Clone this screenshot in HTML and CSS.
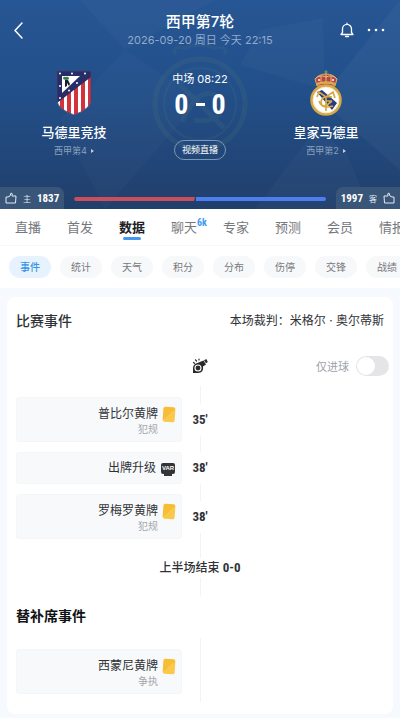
FILE: index.html
```html
<!DOCTYPE html>
<html lang="zh-CN">
<head>
    <meta charset="UTF-8">
    <meta name="viewport" content="width=device-width, initial-scale=1.0">
    <title>西甲第7轮 马德里竞技 - 皇家马德里</title>
    <link rel="stylesheet" href="styles.css">
</head>
<body>
    <header class="match-header">
        <!-- 背景纹理和水印 -->
        <svg class="header-bg" viewBox="0 0 400 209" preserveAspectRatio="xMidYMid slice" aria-hidden="true">
            <path d="M80 0L125 50L215 0Z" fill="#fff" opacity=".025"/>
            <path d="M125 50L60 120L105 209L200 100Z" fill="#fff" opacity=".02"/>
            <path d="M323 18L260 30L240 65L325 90Z" fill="#fff" opacity=".025"/>
            <path d="M400 0L320 100L400 170Z" fill="#fff" opacity=".035"/>
            <path d="M315 130L255 209H370L345 150Z" fill="#fff" opacity=".025"/>
            <g fill="none" stroke="#4d7478" opacity=".2">
                <circle cx="200" cy="104" r="45" stroke-width="5"/>
                <circle cx="200" cy="104" r="36" stroke-width="2"/>
                <path d="M176 80L224 128M182 122Q200 80 222 100Q224 124 194 120" stroke-width="5"/>
                <path d="M176 54Q170 46 185 48Q200 42 215 48Q230 46 224 54" stroke-width="3"/>
            </g>
        </svg>

        <div class="top-bar">
            <button class="icon-btn" type="button" aria-label="返回">
                <svg width="20" height="20" viewBox="0 0 20 20"><path d="M14 3L7 10.500L14 18" fill="none" stroke="#fff" stroke-width="1.500" stroke-linecap="round" stroke-linejoin="round"/></svg>
            </button>
            <div class="title">
                <h1>西甲第7轮</h1>
                <p>2026-09-20 周日 今天 22:15</p>
            </div>
            <div class="actions">
                <button class="icon-btn" type="button" aria-label="提醒">
                    <svg width="16" height="16" viewBox="0 0 16 16"><path d="M2 12.500H14L12.500 10.500V7A4.500 4.700 0 0 0 3.500 7V10.500ZM8 2.300V1.200M6.500 14.500H9.500" fill="none" stroke="#fff" stroke-width="1.300" stroke-linecap="round" stroke-linejoin="round"/></svg>
                </button>
                <button class="icon-btn" type="button" aria-label="更多">
                    <svg width="18" height="16" viewBox="0 0 18 16" fill="#fff"><circle cx="2" cy="8" r="1.300"/><circle cx="9" cy="8" r="1.300"/><circle cx="16" cy="8" r="1.300"/></svg>
                </button>
            </div>
        </div>

        <div class="scoreboard">
            <div class="team">
                <svg class="crest" width="38" height="46" viewBox="0 0 38 46">
                    <defs>
                        <clipPath id="atm"><path d="M2 1H36V31Q35 39 19 45Q3 39 2 31Z"/></clipPath>
                    </defs>
                    <g clip-path="url(#atm)">
                        <path d="M0 0H38V46H0Z" fill="#fff"/>
                        <path d="M5 20H9V46H5ZM12 10H16V46H12ZM19 5H23V46H19ZM26 0H30V46H26ZM33 0H38V46H33Z" fill="#d2333d"/>
                        <path d="M2 1H36V7L2 33Z" fill="#272d68"/>
                        <path d="M7 6H25L7 23Z" fill="#fff"/>
                    </g>
                    <path d="M8 9Q8 6 11 7Q14 6 14 9Q12 11 8 9Z" fill="#3b7b48"/>
                    <path d="M10 10V17L12 16V13L14 16L15 14L13 10Z" fill="#16202c"/>
                    <g fill="#fff"><circle cx="5" cy="3.500" r="1"/><circle cx="17" cy="3.500" r="1"/><circle cx="30" cy="3.500" r="1"/><circle cx="5" cy="16" r="1"/><circle cx="5" cy="28" r="1"/><circle cx="14" cy="20.500" r="1"/><circle cx="22" cy="13" r="1"/></g>
                    <path d="M2 1H36V31Q35 39 19 45Q3 39 2 31Z" fill="none" stroke="#43416f" stroke-width=".8"/>
                </svg>
                <h2>马德里竞技</h2>
                <a class="rank" href="#">西甲第4<i class="arrow"></i></a>
            </div>

            <div class="score">
                <p class="status">中场 08:22</p>
                <p class="goals"><span>0</span><span class="dash"></span><span>0</span></p>
                <button class="live-btn" type="button">视频直播</button>
            </div>

            <div class="team">
                <svg class="crest" width="38" height="46" viewBox="0 0 38 46">
                    <path d="M10 16L8 9Q12 4 19 4Q26 4 30 9L28 16Z" fill="#b9434d" stroke="#d8b158"/>
                    <path d="M8 9Q13 4 19 7Q25 4 30 9M14 6V14M24 6V14M19 1V14" fill="none" stroke="#e4bd68"/>
                    <path d="M10 14Q19 11 28 14" stroke="#d9ad4b" stroke-width="2.500" fill="none"/>
                    <circle cx="19" cy="1.800" r="1.500" fill="#65956b"/>
                    <circle cx="12" cy="10" r="1" fill="#fff"/><circle cx="26" cy="10" r="1" fill="#fff"/>
                    <circle cx="19" cy="30" r="14.500" fill="#fff" stroke="#d7a945" stroke-width="2.500"/>
                    <path d="M10 22L15 20L30 33L25 40Z" fill="#273b83"/>
                    <g fill="none" stroke="#d6aa43" stroke-width="1.700">
                        <path d="M10 27L12 22L19 27L26 22L28 28M19 26V41M25 27Q14 25 14 33Q15 39 26 36M12 31Q14 38 20 35L25 31M19 31H25"/>
                    </g>
                    <circle cx="19" cy="30" r="12.800" fill="none" stroke="#f0ddad" stroke-width=".6"/>
                </svg>
                <h2>皇家马德里</h2>
                <a class="rank" href="#">西甲第2<i class="arrow"></i></a>
            </div>
        </div>

        <div class="vote-bar">
            <button class="vote home" type="button">
                <svg width="12" height="12" viewBox="0 0 12 12"><path d="M1 5H3L5 4L6 1Q8 1 7 4H11L10.500 11H1Z" fill="none" stroke="#e3e9f1" stroke-linejoin="round"/></svg>
                <span>主</span><b>1837</b>
            </button>
            <div class="ratio"><span class="ratio-home" style="width: 48%"></span><span class="ratio-away"></span></div>
            <button class="vote away" type="button">
                <b>1997</b><span>客</span>
                <svg width="12" height="12" viewBox="0 0 12 12"><path d="M11 5H9L7 4L6 1Q4 1 5 4H1L1.500 11H11Z" fill="none" stroke="#e3e9f1" stroke-linejoin="round"/></svg>
            </button>
        </div>
    </header>

    <nav class="tabs">
        <a href="#">直播</a>
        <a href="#">首发</a>
        <a class="active" href="#">数据</a>
        <a href="#">聊天<sup>6k</sup></a>
        <a href="#">专家</a>
        <a href="#">预测</a>
        <a href="#">会员</a>
        <a href="#">情报</a>
    </nav>
    <nav class="chips">
        <a class="active" href="#">事件</a>
        <a href="#">统计</a>
        <a href="#">天气</a>
        <a href="#">积分</a>
        <a href="#">分布</a>
        <a href="#">伤停</a>
        <a href="#">交锋</a>
        <a href="#">战绩</a>
    </nav>

    <main class="card">
        <div class="card-head">
            <h3>比赛事件</h3>
            <p>本场裁判：米格尔 · 奥尔蒂斯</p>
        </div>

        <div class="filter">
            <svg class="whistle" width="16" height="16" viewBox="0 0 16 16">
                <path d="M6 4.800L11.500 2.500L14 6.500L11 8.500Q12 15 6 15H1V10Q1 6 6 4.800Z" fill="#292a2c"/>
                <circle cx="6" cy="10" r="3" fill="none" stroke="#fff" stroke-width="1.100"/>
                <path d="M12 2.200L14.300 1L15.800 4L14 5.300Z" fill="#292a2c"/>
                <path d="M1.500 4.500L2.500 5.300M3.500 1.800L4.500 3M7 1V2" stroke="#292a2c" stroke-width="1.200" stroke-linecap="round"/>
            </svg>
            <label class="only-goals"><span>仅进球</span><input type="checkbox"></label>
        </div>

        <div class="timeline">
            <div class="event">
                <div class="event-box">
                    <div><p>普比尔黄牌</p><small>犯规</small></div>
                    <i class="yellow-card"></i>
                </div>
                <time>35′</time>
            </div>
            <div class="event">
                <div class="event-box single">
                    <div><p>出牌升级</p></div>
                    <i class="var">VAR</i>
                </div>
                <time>38′</time>
            </div>
            <div class="event">
                <div class="event-box">
                    <div><p>罗梅罗黄牌</p><small>犯规</small></div>
                    <i class="yellow-card"></i>
                </div>
                <time>38′</time>
            </div>
            <p class="half">上半场结束 <b>0-0</b></p>
        </div>

        <h3 class="bench-title">替补席事件</h3>
        <div class="timeline bench">
            <div class="event">
                <div class="event-box">
                    <div><p>西蒙尼黄牌</p><small>争执</small></div>
                    <i class="yellow-card"></i>
                </div>
            </div>
        </div>
    </main>
</body>
</html>
```

FILE: styles.css
```css
* {
    box-sizing: border-box;
}
body {
    margin: 0;
    background: #f6f9fd;
    color: #303236;
    font-family: Inter, "Noto Sans CJK SC", sans-serif;
    font-size: 13px;
    overflow-x: hidden;
}
h1, h2, h3, p {
    margin: 0;
    font-weight: 500;
}
a {
    color: inherit;
    text-decoration: none;
}
button {
    padding: 0;
    border: 0;
    background: none;
    color: inherit;
    font: inherit;
}
svg {
    display: block;
}

/* 头部 */
.match-header {
    position: relative;
    background: linear-gradient(#275694, #224f89 45%, #213f6b);
    color: #fff;
}
.header-bg {
    position: absolute;
    inset: 0;
    width: 100%;
    height: 100%;
}
.top-bar,
.scoreboard,
.vote-bar {
    position: relative;
}
.top-bar {
    display: grid;
    grid-template-columns: 64px 1fr 64px;
    align-items: center;
    padding: 12px 8px 0;
}
.icon-btn {
    display: flex;
}
.title {
    text-align: center;
}
.title h1 {
    font-size: 15px;
    line-height: 20px;
}
.title p {
    color: #91abcd;
    font-size: 11px;
    line-height: 16px;
    font-weight: 400;
}
.actions {
    display: flex;
    justify-content: flex-end;
    gap: 12px;
    padding-right: 7px;
}
.scoreboard {
    display: grid;
    grid-template-columns: 148px 1fr 148px;
    padding-top: 22px;
}
.team,
.score {
    display: flex;
    flex-direction: column;
    align-items: center;
}
.team h2 {
    margin-top: 6px;
    font-size: 13px;
    line-height: 20px;
}
.rank {
    display: flex;
    align-items: center;
    gap: 4px;
    margin-top: 1px;
    color: #8ba0bd;
    font-size: 9px;
    line-height: 16px;
}
.arrow {
    border: 2px solid transparent;
    border-left: 3px solid #c0cddd;
    border-right: 0;
}
.status {
    font-size: 11px;
    line-height: 18px;
    font-weight: 400;
}
.goals {
    display: flex;
    align-items: center;
    gap: 7px;
    height: 32px;
    font: bold 28px "Roboto Condensed", "Liberation Sans Narrow", sans-serif;
}
.dash {
    width: 9px;
    height: 3px;
    background: #fff;
}
.live-btn {
    height: 20px;
    margin-top: 20px;
    padding: 0 7px;
    border: 1px solid #7c98b5;
    border-radius: 10px;
    font-size: 9px;
    line-height: 18px;
}
.vote-bar {
    display: flex;
    align-items: center;
    gap: 10px;
    margin-top: 27px;
}
.vote {
    display: flex;
    align-items: center;
    gap: 6px;
    height: 22px;
    padding: 0 5px;
    background: #395679;
    color: #dfe6ef;
    font-size: 8px;
}
.vote b {
    color: #fff;
    font: bold 11px "Roboto Condensed", "Liberation Sans Narrow", sans-serif;
}
.home {
    border-radius: 0 7px 0 0;
}
.away {
    border-radius: 7px 0 0;
}
.ratio {
    display: flex;
    flex: 1;
    gap: 1px;
    height: 4px;
    margin-top: 2px;
}
.ratio-home {
    background: #c84f5b;
    border-radius: 2px 0 0 2px;
    clip-path: polygon(0 0, 100% 0, calc(100% - 1px) 100%, 0 100%);
}
.ratio-away {
    flex: 1;
    background: #4d7eee;
    border-radius: 0 2px 2px 0;
}

/* 导航 */
.tabs,
.chips {
    display: flex;
    background: #fff;
    overflow: hidden;
    white-space: nowrap;
}
.tabs {
    gap: 26px;
    height: 37px;
    padding: 8px 15px 0;
    border-bottom: 1px solid #f7f8fa;
    color: #76787d;
    line-height: 20px;
}
.tabs a {
    position: relative;
    flex: 0 0 26px;
}
.tabs .active {
    color: #202124;
    font-weight: 700;
}
.tabs .active::after {
    content: "";
    display: block;
    width: 18px;
    height: 3px;
    margin: 0 auto;
    border-radius: 2px;
    background: #4497ec;
}
.tabs sup {
    position: absolute;
    left: 26px;
    top: 0;
    color: #4298f3;
    font: bold 10px "Roboto Condensed", "Liberation Sans Narrow", sans-serif;
}
.chips {
    gap: 9px;
    padding: 10px 9px;
}
.chips a {
    flex: 0 0 42px;
    border-radius: 11px;
    background: #f7f8fa;
    color: #76787d;
    font-size: 10px;
    line-height: 22px;
    text-align: center;
}
.chips .active {
    background: #e6f3fe;
    color: #3991e8;
    font-weight: 500;
}

/* 事件 */
.card {
    margin: 9px 7px 2px;
    padding: 14px 9px 12px;
    border-radius: 8px;
    background: #fff;
}
.card-head {
    display: flex;
    align-items: center;
    justify-content: space-between;
}
.card-head h3 {
    font-size: 14px;
    line-height: 20px;
}
.card-head p {
    font-size: 12px;
    line-height: 20px;
    font-weight: 400;
}
.filter {
    display: grid;
    grid-template-columns: 1fr 16px 1fr;
    align-items: center;
    margin-top: 25px;
}
.only-goals {
    grid-column: 3;
    display: flex;
    align-items: center;
    justify-content: flex-end;
    gap: 7px;
    margin-right: -5px;
    color: #a0a1a8;
    font-size: 11px;
}
.whistle {
    grid-column: 2;
}
.only-goals input {
    display: flex;
    appearance: none;
    width: 33px;
    height: 20px;
    margin: 0;
    padding: 1px;
    border-radius: 10px;
    background: #e5e5e8;
}
.only-goals input::before {
    content: "";
    width: 18px;
    height: 18px;
    border-radius: 50%;
    background: #fff;
}
.only-goals input:checked {
    justify-content: flex-end;
    background: #4497ec;
}
.timeline {
    display: flex;
    flex-direction: column;
    gap: 10px;
    padding: 21px 0 18px;
    background: linear-gradient(#f2f3f5, #f2f3f5) center 10px / 1px 100% no-repeat;
}
.event {
    display: grid;
    grid-template-columns: calc(50% - 18px) 36px;
    align-items: center;
}
.event-box {
    display: flex;
    justify-content: flex-end;
    gap: 5px;
    height: 45px;
    padding: 7px 6px 0 0;
    border: 1px solid #f4f6f8;
    border-radius: 3px;
    background: #f7f9fb;
    text-align: right;
}
.single {
    height: 32px;
    padding-top: 6px;
}
.event-box p {
    font-size: 12px;
    line-height: 18px;
    font-weight: 400;
}
.event-box small {
    display: block;
    color: #a5a7ac;
    font-size: 10px;
    line-height: 12px;
}
.yellow-card {
    width: 12px;
    height: 15px;
    margin-top: 2px;
    border-radius: 2px;
    background: linear-gradient(135deg, #f6bd35 50%, #fac94c 50%);
    transform: rotate(4deg);
}
.var {
    width: 14px;
    height: 11px;
    margin-top: 4px;
    border-radius: 2px;
    background: #343538;
    color: #fff;
    font: bold 6px/11px "Liberation Sans", sans-serif;
    text-align: center;
}
.var::after {
    content: "";
    display: block;
    width: 8px;
    height: 2px;
    margin: 0 auto;
    background: #343538;
}
time {
    padding: 8px 0;
    background: #fff;
    font: bold 13px/16px "Roboto Condensed", "Liberation Sans Narrow", sans-serif;
    text-align: center;
}
.half {
    margin-top: 9px;
    background: #fff;
    font-size: 12px;
    line-height: 20px;
    text-align: center;
}
.half b {
    font: bold 13px "Roboto Condensed", "Liberation Sans Narrow", sans-serif;
}
.bench-title {
    margin-top: 8px;
    color: #111214;
    font-size: 14px;
    line-height: 24px;
    font-weight: 700;
}
.bench {
    padding-bottom: 8px;
}
```
